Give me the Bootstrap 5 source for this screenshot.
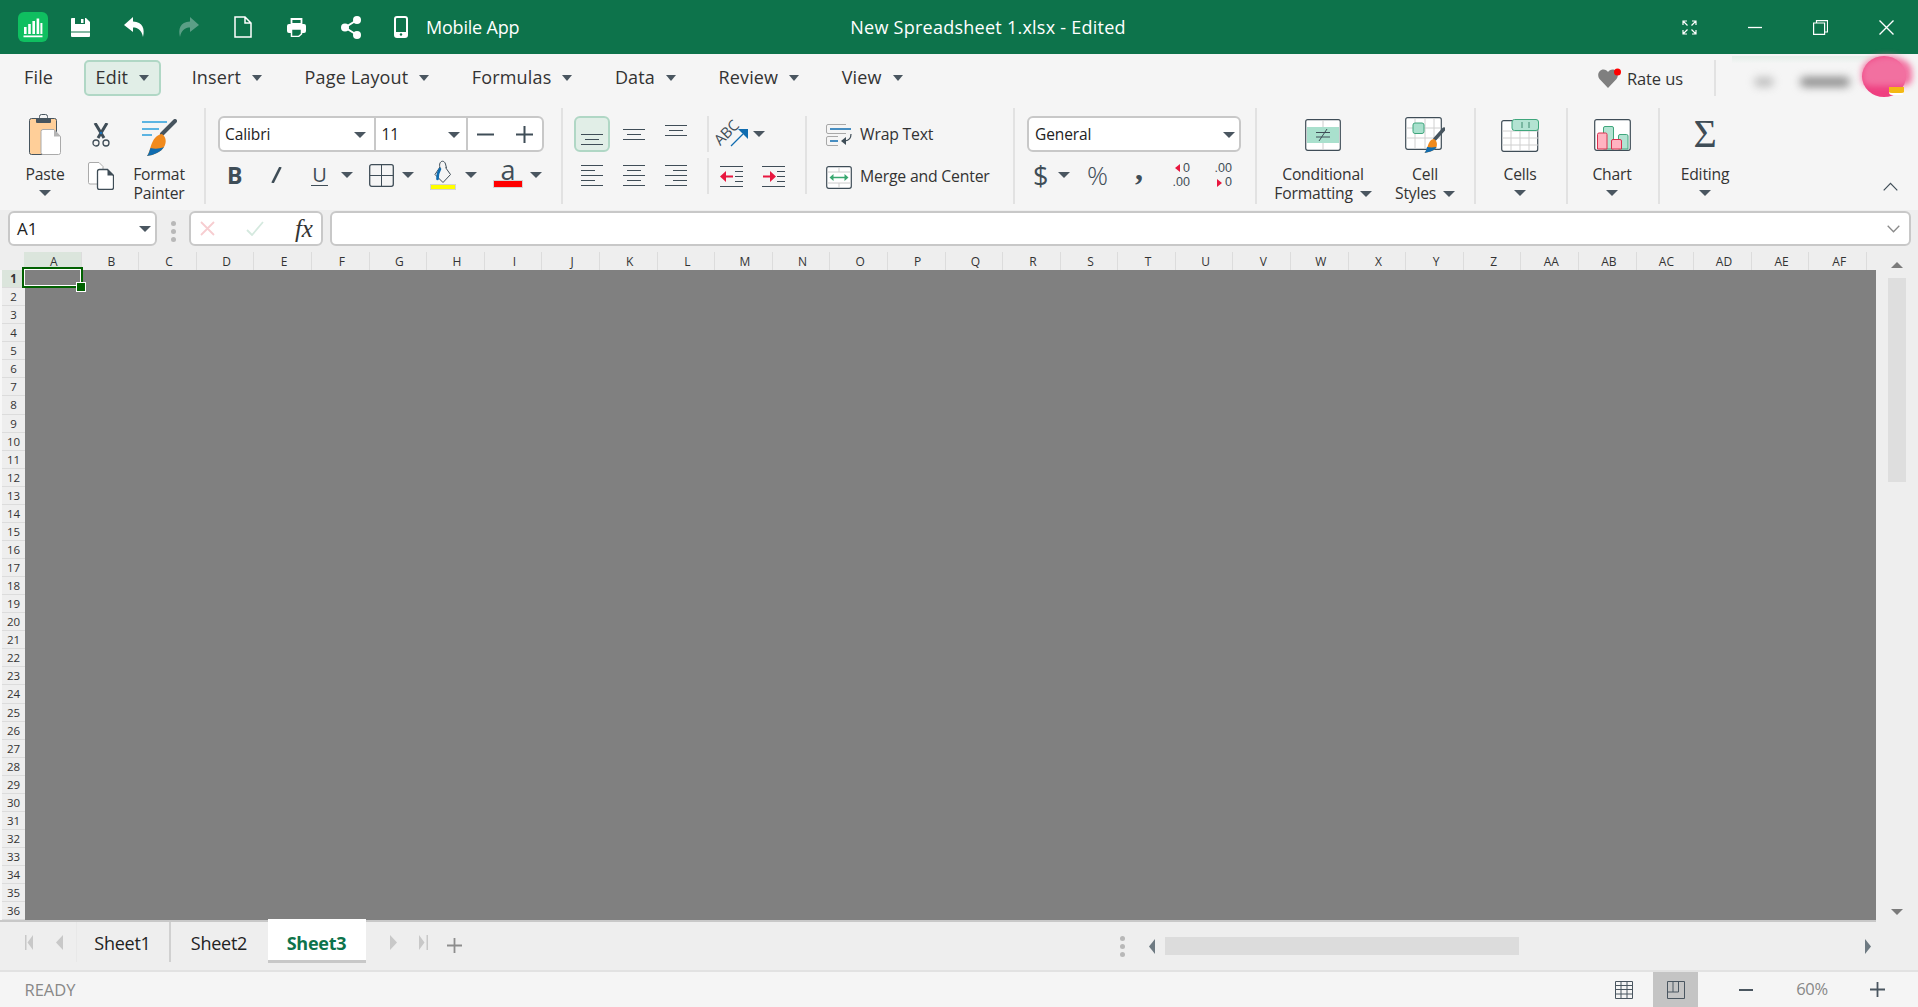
<!DOCTYPE html>
<html lang="en">
<head>
<meta charset="UTF-8" />
<title>New Spreadsheet 1.xlsx - Edited</title>
<link href="https://cdn.jsdelivr.net/npm/bootstrap@5.3.0/dist/css/bootstrap.min.css" rel="stylesheet" />
<style>
body { font-family: "Open Sans", "Noto Sans", sans-serif; font-size: 15px; color: #222; background: #f5f5f5; overflow: hidden; letter-spacing: -.1px; }
.app-shell { height: 1007px; }
.cr { display: inline-block; width: 0; height: 0; border-left: 6px solid transparent; border-right: 6px solid transparent; border-top: 6px solid #4a5660; flex: none; }

/* title bar */
.ttl-bar { height: 54px; background: #0d734b; color: #fff; padding-left: 18px; flex: none; }
.ttl-ic { width: 54px; }
.ttl-ic:first-of-type { margin-left: 5.5px; }
.ttl-phone { width: 48.5px; }
.ttl-mobile { font-size: 18px; letter-spacing: -.2px; }
.ttl-name { font-size: 18px; margin-left: 331px; letter-spacing: .25px; }
.win-btns { margin-left: auto; padding-right: 24px; }
.win-btns svg { display: block; }
.win-btns svg + svg { margin-left: 51px; }

/* menu row */
.mnu-row { height: 54px; padding-left: 12px; gap: 18.5px; flex: none; }
.mnu-btn { height: 36px; margin-top: 6px; padding: 0 10px 2px; border: 2px solid transparent; border-radius: 5px; font-size: 18px; letter-spacing: .15px; color: #333; gap: 11px; }
.mnu-btn .cr { border-left-width: 5.5px; border-right-width: 5.5px; margin-top: 2px; }
.mnu-on { background: #e1eee7; border-color: #b0d7c5; }
.rate-box { margin-left: auto; margin-top: 6px; height: 36px; padding-right: 6px; }
.rate-txt { font-size: 16.5px; margin-left: 5px; color: #333; padding-top: 2px; }
.rate-sep { width: 2px; height: 36px; background: #e2e2e2; margin-left: 31px; margin-right: 16px; }
.usr-blur { width: 180px; height: 41px; margin-top: -3px; }
.usr-strip { left: 0; right: 30px; top: 0; height: 30px; background: linear-gradient(#e4efe9, #f5f5f5 25%); }
.usr-smg { height: 10px; top: 21px; background: #8d8d8d; filter: blur(4px); border-radius: 5px; }
.usr-smg-a { left: 22px; width: 20px; opacity: .5; }
.usr-smg-b { left: 68px; width: 50px; }
.usr-pic { right: 6px; top: 0; width: 44px; height: 41px; border-radius: 50%; background: #ef3f80; overflow: hidden; }
.usr-pic-top { right: 0; top: 0; width: 50px; height: 30px; background: #f270a0; filter: blur(3px); border-radius: 50% 50% 20% 20%; }
.usr-crown { right: 8px; top: 31px; width: 15px; height: 8px; background: #f4b914; border-radius: 0 0 3px 3px; border-bottom: 2px solid #fff; }

/* ribbon */
.rbn { height: 102px; padding-bottom: 6px; flex: none; }
.rb-grp { border-left: 2px solid #e2e2e2; flex: none; position: relative; }
.rb-clip { width: 204px; padding-left: 20px; padding-top: 6px; border-left: 0; }
.rb-font { width: 357px; padding-left: 12px; padding-top: 8px; }
.rb-align { width: 452px; padding-left: 8px; padding-top: 8px; }
.rb-num { width: 242px; padding-left: 12px; padding-top: 8px; }
.rb-sty { width: 219px; padding-left: 7px; padding-top: 6px; }
.rb-cell, .rb-chart { width: 92px; padding-top: 6px; padding-right: 2px; }
.rb-edit { width: 94px; padding-top: 6px; padding-right: 2px; }
.rb-tool { text-align: center; }
.rb-w50 { width: 50px; }
.rb-w30 { width: 30px; margin-left: 16px; padding-top: 9px; }
.rb-w58 { width: 58px; margin-left: 14px; }
.rb-w117 { width: 118px; }
.rb-w86 { width: 86px; }
.ic-slot { height: 42px; }
.rb-lbl { margin-top: 9px; font-size: 15.7px; line-height: 18.5px; color: #333; letter-spacing: -.2px; }
.rb-lbl .cr { margin-left: 3px; vertical-align: 2px; }
.rb-tool > .cr { display: block; margin: 6px auto 0; }
.cp-ic { margin-top: 15px; }
.inp-box { height: 36px; background: #fff; border: 2px solid #c8c8c8; border-radius: 6px; font-size: 15.5px; color: #222; }
.inp-font { width: 326px; }
.inp-fname { width: 157px; padding: 1px 8px 0 5px; border-right: 2px solid #c8c8c8; }
.inp-fsize { width: 92px; padding: 1px 2px 0 5px; border-right: 2px solid #c8c8c8; }
.inp-step { padding: 0 9px; gap: 22px; }
.inp-gen { width: 214px; padding: 2px 4px 0 6px; }
.fnt-tools { display: grid; grid-template-columns: 44px 40px 30px 28px 33px 27px 36px 29px 36px 12px; padding-left: 9px; height: 30px; margin-top: 8px; align-items: center; justify-items: start; color: #3f4d57; }
.fnt-b { font-size: 23px; font-weight: 700; line-height: 1; }
.fnt-u { width: 17px; font-size: 20px; line-height: 20px; text-align: center; border-bottom: 1.5px solid #3f4d57; }
.fnt-col { font-size: 27px; line-height: 20px; height: 30px; width: 28px; text-align: center; }
.fnt-red { display: block; height: 6px; margin-top: 1px; background: #f00; outline: 1.5px solid #d4d4d4; }
.aln-cells { display: grid; grid-template-columns: repeat(3, 42px); grid-template-rows: 36px 34px; row-gap: 6px; place-items: center; width: 136px; }
.aln-on { width: 36px; height: 36px; background: #e1eee7; border: 2px solid #b0d7c5; border-radius: 6px; padding-bottom: 5px; }
.txt-ctl { width: 98px; }
.txt-top, .txt-bot { border-left: 2px solid #e2e2e2; height: 36px; }
.txt-top { padding-left: 10px; }
.txt-bot { padding-left: 11px; margin-top: 6px; gap: 19px; }
.abc-wrap { width: 30px; height: 32px; }
.abc-txt { left: -7px; top: 3px; font-size: 15px; color: #3f4d57; transform: rotate(-45deg); letter-spacing: -.2px; }
.abc-arw { left: 11px; top: 11px; }
.wrp-col { border-left: 2px solid #e2e2e2; padding-left: 19px; height: 78px; font-size: 15.8px; color: #333; letter-spacing: -.2px; }
.wrp-line { height: 42px; gap: 8px; }
.wrp-line:first-child { margin-top: -2px; }
.wrp-line svg { width: 26px; }
.num-tools { display: grid; grid-template-columns: 25px 29px 48px 37px 42px 20px; grid-template-rows: 30px; padding-left: 6px; height: 30px; margin-top: 8px; align-items: center; justify-items: start; color: #3f4d57; }
.num-d { font-size: 27px; line-height: 1; }
.num-p { font-size: 26px; line-height: 1; font-weight: 300; }
.num-c { font-family: "Liberation Serif", serif; font-size: 32px; line-height: 22px; font-weight: 700; height: 22px; margin-bottom: 12px; }
.num-dec { font-family: "Liberation Sans", sans-serif; font-size: 12.5px; line-height: 14.5px; text-align: right; width: 18px; letter-spacing: 0; }
.num-tri { display: inline-block; width: 0; height: 0; border-top: 4.5px solid transparent; border-bottom: 4.5px solid transparent; margin-right: 3px; vertical-align: -.5px; }
.num-tl { border-right: 5px solid #e8173f; }
.num-tr { border-left: 5px solid #e8173f; }
.sgm-ic { font-family: "Liberation Serif", serif; font-size: 40px; line-height: 1; color: #3f4d57; margin: -2px 0 0; }
.rb-chev { margin-left: auto; margin-right: 20px; margin-top: 74px; height: 12px; }

/* formula row */
.fx-row { height: 42px; background: #eee; padding: 1px 7px 0 8px; flex: none; }
.fx-box { height: 35px; background: #fff; border: 2px solid #c8c8c8; border-radius: 6px; }
.fx-name { width: 149px; padding: 0 4px 0 7px; font-size: 17px; color: #222; }
.fx-dots { width: 32px; }
.fx-btns { width: 134px; padding: 0 8px 0 9px; }
.fx-fn { font-family: "Liberation Serif", serif; font-style: italic; font-size: 25px; line-height: 1; margin-left: 31px; color: #333; }
.fx-ok { margin-left: 31px; }
.fx-edit { margin-left: 7px; flex: 1; padding-right: 9px; }
.dot-v { width: 5px; height: 5px; border-radius: 50%; background: #b8b8b8; margin: 1.5px 0; }

/* sheet */
.sh-main { flex: 1; min-height: 0; background: #eee; }
.sh-left { width: 1876px; }
.col-heads { height: 18px; flex: none; }
.ch-blank { width: 24px; flex: none; }
.ch-cell { width: 57.6px; flex: none; padding-left: 3px; text-align: center; font-size: 12px; line-height: 19px; letter-spacing: 0; color: #333; border-right: 1.5px solid #dcdcdc; }
.ch-on { background: #dbe5dc; }
.sh-body { flex: 1; min-height: 0; }
.row-heads { width: 25px; border-left: 2px solid #f7f7f7; flex: none; }
.rh-cell { flex: 1 1 0; min-height: 0; text-align: center; font-size: 11.5px; line-height: 18px; letter-spacing: 0; color: #333; border-bottom: 1px solid #dcdcdc; }
.rh-on { background: #dbe5dc; font-weight: 700; }
.sh-grid { flex: 1; background: #808080; }
.sel-box { left: -3px; top: -3px; width: 61px; height: 21px; border: 2px solid #006100; box-shadow: inset 0 0 0 1px #fff; }
.sel-hnd { right: -4px; bottom: -5px; width: 8px; height: 8px; background: #006100; outline: 1px solid #fff; }
.sh-bline { height: 2px; background: #c8c8c8; flex: none; }
.vs-bar { flex: 1; padding-left: 12px; padding-top: 10px; }
.vs-up { width: 0; border-left: 6px solid transparent; border-right: 6px solid transparent; border-bottom: 6px solid #7b7b7b; margin-left: 3px; }
.vs-dn { width: 0; border-left: 6px solid transparent; border-right: 6px solid transparent; border-top: 6px solid #7b7b7b; margin: auto 0 7px 3px; }
.vs-thumb { width: 18px; height: 204px; background: #dedede; margin-top: 10px; }

/* tabs */
.tab-bar { height: 50px; background: #eee; border-bottom: 2px solid #e2e2e2; flex: none; padding-left: 25px; position: relative; }
.tab-nav { height: 40px; }
.tab-nav1 { width: 30px; }
.tab-nav2 { width: 20.5px; }
.tab-itm { height: 40px; padding-top: 3px; font-size: 18px; letter-spacing: -.25px; color: #222; }
.tab-s1 { width: 95px; border-left: 1px solid #e8e8e8; border-right: 2px solid #d0d0d0; }
.tab-s2 { width: 97px; }
.tab-s3 { width: 98px; height: 44px; margin-top: -3px; padding-top: 7px; background: #fff; border-bottom: 3px solid #c8c8c8; font-weight: 700; color: #0d734b; }
.tab-nav3 { margin-left: 24px; width: 29px; }
.tab-nav4 { width: 28px; }
.tab-add { height: 46px; }
.tab-right { margin-left: auto; width: 798px; height: 48px; }
.hs-thumb { width: 354px; height: 18px; background: #dcdcdc; margin: 0 346px 0 10px; }

/* status */
.sta-bar { height: 35px; flex: none; padding-left: 24.5px; font-size: 16.5px; color: #888; letter-spacing: 0; }
.sta-rdy { padding-top: 1px; }
.sta-tools { margin-left: auto; }
.sta-view { width: 45px; height: 35px; }
.sta-on { background: #c4c4c4; }
.sta-g { margin-right: 20px; }
.sta-min { margin-left: 41px; }
.sta-pct { width: 34px; margin: 0 41px 0 42px; font-size: 16.5px; letter-spacing: -.3px; text-align: center; }
.sta-pls { margin-right: 33px; }
</style>
</head>
<body>
<div class="app-shell d-flex flex-column">

  <!-- title bar -->
  <div class="ttl-bar d-flex align-items-center">
    <svg width="30" height="30" viewBox="0 0 30 30"><rect width="30" height="30" rx="6" fill="#0fbf60"/><path d="M6 15h2.600v7H6zM10.200 12h2.600v10h-2.600zM14.400 9H17v13h-2.600zM18.600 6.500h2.600V22h-2.600zM22.400 11h2v11h-2zM5.500 23.500h19v1.800h-19z" fill="#fff"/></svg>
    <div class="ttl-ic d-flex justify-content-center"><svg width="19" height="19" viewBox="0 0 19 19"><path d="M0 1a1 1 0 0 1 1-1h14l4 4v14a1 1 0 0 1-1 1H1a1 1 0 0 1-1-1z" fill="#fff"/><path d="M4 0h10v6H4z" fill="#0d734b"/><path d="M10 1h2.500v4H10z" fill="#fff"/><path d="M0 13.500h19v1H0z" fill="#0d734b"/></svg></div>
    <div class="ttl-ic d-flex justify-content-center"><svg width="21" height="20" viewBox="0 0 21 20"><path d="M9 0 0 8l9 7v-4.500c5 0 8.500 2.500 10 9.500 2-8 0-15-10-15.500z" fill="#fff"/></svg></div>
    <div class="ttl-ic d-flex justify-content-center"><svg width="21" height="20" viewBox="0 0 21 20"><path d="m12 0 9 8-9 7v-4.500c-5 0-8.500 2.500-10 9.500-2-8 0-15 10-15.500z" fill="#5b9f86"/></svg></div>
    <div class="ttl-ic d-flex justify-content-center"><svg width="18" height="22" viewBox="0 0 18 22"><path d="M1 1h10l6 6v14H1zM11 1v6h6" fill="none" stroke="#fff" stroke-width="1.500"/></svg></div>
    <div class="ttl-ic d-flex justify-content-center"><svg width="19" height="19" viewBox="0 0 19 19"><path d="M4.500 1h10v5h-10z" fill="none" stroke="#fff" stroke-width="1.800"/><rect y="6" width="19" height="9" rx="2" fill="#fff"/><path d="M4.500 11h10v5l-3 2.500h-7z" fill="#0d734b" stroke="#fff" stroke-width="1.500"/></svg></div>
    <div class="ttl-ic d-flex justify-content-center"><svg width="20" height="23" viewBox="0 0 20 23"><path d="M16 4 4 11.500 16 19" fill="none" stroke="#fff" stroke-width="2"/><circle cx="16" cy="4" r="4" fill="#fff"/><circle cx="4" cy="11.500" r="4" fill="#fff"/><circle cx="16" cy="19" r="4" fill="#fff"/></svg></div>
    <div class="ttl-phone d-flex ps-3"><svg width="14" height="22" viewBox="0 0 14 22"><rect x="1" y="1" width="12" height="20" rx="2" fill="none" stroke="#fff" stroke-width="2"/><path d="M1 16h12v5H1z" fill="#fff"/><circle cx="7" cy="18.500" r="1.200" fill="#0d734b"/></svg></div>
    <span class="ttl-mobile">Mobile App</span>
    <span class="ttl-name">New Spreadsheet 1.xlsx - Edited</span>
    <div class="win-btns d-flex align-items-center">
      <svg width="15" height="15" viewBox="0 0 15 15"><path d="M1 5V1h4M1 1l4.500 4.500M10 1h4v4M14 1 9.500 5.500M1 10v4h4M1 14l4.500-4.500M14 10v4h-4M14 14 9.500 9.500" fill="none" stroke="#fff" stroke-width="1.200"/></svg>
      <svg width="14" height="15" viewBox="0 0 14 15"><path d="M0 7.500h14" stroke="#fff" stroke-width="1.300"/></svg>
      <svg width="15" height="15" viewBox="0 0 15 15"><path d="M.6 3h11v11.400H.6zM3.500 3V.6h11v11.400H11.600" fill="none" stroke="#fff" stroke-width="1.200"/></svg>
      <svg width="15" height="15" viewBox="0 0 15 15"><path d="m.5.500 14 14M14.500.500l-14 14" stroke="#fff" stroke-width="1.400"/></svg>
    </div>
  </div>

  <!-- menu row -->
  <div class="mnu-row d-flex align-items-start">
    <div class="mnu-btn d-flex align-items-center">File</div>
    <div class="mnu-btn mnu-on d-flex align-items-center">Edit <span class="cr"></span></div>
    <div class="mnu-btn d-flex align-items-center">Insert <span class="cr"></span></div>
    <div class="mnu-btn d-flex align-items-center">Page Layout <span class="cr"></span></div>
    <div class="mnu-btn d-flex align-items-center">Formulas <span class="cr"></span></div>
    <div class="mnu-btn d-flex align-items-center">Data <span class="cr"></span></div>
    <div class="mnu-btn d-flex align-items-center">Review <span class="cr"></span></div>
    <div class="mnu-btn d-flex align-items-center">View <span class="cr"></span></div>
    <div class="rate-box d-flex align-items-center">
      <svg width="24" height="21" viewBox="0 0 24 21"><path d="M10 20 1.500 11C-1.500 7 1 1.500 5.500 1.500c2 0 3.500 1 4.500 2.500 1-1.500 2.500-2.500 4.500-2.500C19 1.500 21.500 7 18.500 11z" fill="#7f7f7f"/><circle cx="19.500" cy="4" r="3.500" fill="#f00"/></svg>
      <span class="rate-txt">Rate us</span>
      <div class="rate-sep"></div>
      <div class="usr-blur position-relative">
        <div class="usr-strip position-absolute"></div>
        <div class="usr-smg usr-smg-a position-absolute"></div>
        <div class="usr-smg usr-smg-b position-absolute"></div>
        <div class="usr-pic position-absolute"></div>
        <div class="usr-pic-top position-absolute"></div>
        <div class="usr-crown position-absolute"></div>
      </div>
    </div>
  </div>

  <!-- ribbon -->
  <div class="rbn d-flex">
    <div class="rb-grp rb-clip d-flex">
      <div class="rb-w50 rb-tool">
        <div class="ic-slot d-flex justify-content-center align-items-start">
          <svg width="32" height="41" viewBox="0 0 32 41"><rect x=".5" y="4.500" width="27" height="36" rx="2" fill="#ffcf99" stroke="#46545e"/><rect x="10.500" y=".5" width="8" height="5" rx="2" fill="none" stroke="#46545e"/><rect x="7" y="4" width="15" height="5" rx="1" fill="#46545e"/><path d="M14 15.500h11l6.500 7v16a2 2 0 0 1-2 2H14a2 2 0 0 1-2-2v-21a2 2 0 0 1 2-2z" fill="#fff" stroke="#aaa"/><path d="M25 15.500v7h6.500z" fill="#b5b5b5"/></svg>
        </div>
        <div class="rb-lbl">Paste</div>
        <span class="cr"></span>
      </div>
      <div class="rb-w30 d-flex flex-column align-items-center">
        <svg width="18" height="24" viewBox="0 0 18 24"><path d="m3 0 9 15M15 0 6 15" stroke="#3f4d57" stroke-width="3"/><circle cx="4" cy="20" r="3" fill="none" stroke="#3f4d57" stroke-width="1.300"/><circle cx="14" cy="20" r="3" fill="none" stroke="#3f4d57" stroke-width="1.300"/><circle cx="9" cy="10" r="1.300" fill="#1a6fb5"/></svg>
        <svg class="cp-ic" width="26" height="28" viewBox="0 0 26 28"><path d="M2 .5h9l4 4V22H2a1.500 1.500 0 0 1-1.500-1.500V2A1.500 1.500 0 0 1 2 .5z" fill="#fff" stroke="#aaa"/><path d="M11.500 7.500h8l6 6v12a2 2 0 0 1-2 2h-12a2 2 0 0 1-2-2v-16a2 2 0 0 1 2-2z" fill="#fff" stroke="#3f4d57" stroke-width="1.300"/><path d="M19.500 7.500v6h6z" fill="#3f4d57"/></svg>
      </div>
      <div class="rb-w58 rb-tool">
        <div class="ic-slot d-flex justify-content-center align-items-end">
          <svg width="35" height="37" viewBox="0 0 35 37"><path d="M0 3h25M0 10h17M0 16h10" stroke="#2a9fdc" stroke-width="1.300"/><path d="M33 2 20 15" stroke="#46545e" stroke-width="4" stroke-linecap="round"/><path d="M20 15c4 3 5 8 2 13-3 5-10 8-17 9 3-4 3-10 6-15 2-4 6-7 9-7z" fill="#f08a1d"/><path d="M5 37c2-3 2.500-5 3.500-8 4 1 9 1 13.500-1-3 5-10 8-17 9z" fill="#0f6cb0"/></svg>
        </div>
        <div class="rb-lbl">Format<br>Painter</div>
      </div>
    </div>

    <div class="rb-grp rb-font">
      <div class="inp-box inp-font d-flex">
        <div class="inp-fname d-flex align-items-center justify-content-between">Calibri <span class="cr"></span></div>
        <div class="inp-fsize d-flex align-items-center justify-content-between">11 <span class="cr me-1"></span></div>
        <div class="inp-step d-flex align-items-center">
          <svg width="17" height="17" viewBox="0 0 17 17"><path d="M0 8.500h17" stroke="#3f4d57" stroke-width="2"/></svg>
          <svg width="17" height="17" viewBox="0 0 17 17"><path d="M0 8.500h17M8.500 0v17" stroke="#3f4d57" stroke-width="2"/></svg>
        </div>
      </div>
      <div class="fnt-tools">
        <span class="fnt-b">B</span>
        <svg width="11" height="16" viewBox="0 0 11 16"><path d="M9.500 0 1.500 16" stroke="#3f4d57" stroke-width="2.600"/></svg>
        <span class="fnt-u">U</span>
        <span class="cr"></span>
        <svg width="25" height="23" viewBox="0 0 25 23"><rect x=".7" y=".7" width="23.600" height="21.600" rx="2" fill="none" stroke="#3f4d57" stroke-width="1.300"/><path d="M12.500 1v21M1 11.500h23" stroke="#3f4d57"/></svg>
        <span class="cr"></span>
        <svg width="28" height="30" viewBox="0 0 28 30"><path d="M11 8C9 1 15-1 16.500 4l1 4M11 7 6 14.500l8 8 7.500-8-5-7" fill="none" stroke="#3f4d57"/><path d="M11 9C9 12 8.500 15 8.500 19" fill="none" stroke="#0f6cb0" stroke-width="2.600" stroke-linecap="round"/><path d="M1 24h26v6H1z" fill="#d4d4d4"/><path d="M2 25h24v4H2z" fill="#ff0"/></svg>
        <span class="cr"></span>
        <span class="fnt-col">a<span class="fnt-red"></span></span>
        <span class="cr"></span>
      </div>
    </div>

    <div class="rb-grp rb-align d-flex">
      <div class="aln-cells">
        <div class="aln-on d-flex justify-content-center align-items-end"><svg width="22" height="11" viewBox="0 0 22 11"><path d="M0 .5h22M4 5.500h14M0 10.500h22" stroke="#3f4d57"/></svg></div>
        <svg width="22" height="11" viewBox="0 0 22 11"><path d="M0 .5h22M4 5.500h14M0 10.500h22" stroke="#3f4d57"/></svg>
        <svg class="mb-2" width="22" height="11" viewBox="0 0 22 11"><path d="M0 .5h22M4 5.500h14M0 10.500h22" stroke="#3f4d57"/></svg>
        <svg width="22" height="21" viewBox="0 0 22 21"><path d="M0 .5h22M0 5.500h14M0 10.500h22M0 15.500h14M0 20.500h22" stroke="#3f4d57"/></svg>
        <svg width="22" height="21" viewBox="0 0 22 21"><path d="M0 .5h22M4 5.500h14M0 10.500h22M4 15.500h14M0 20.500h22" stroke="#3f4d57"/></svg>
        <svg width="22" height="21" viewBox="0 0 22 21"><path d="M0 .5h22M8 5.500h14M0 10.500h22M8 15.500h14M0 20.500h22" stroke="#3f4d57"/></svg>
      </div>
      <div class="txt-ctl">
        <div class="txt-top d-flex align-items-center">
          <div class="abc-wrap position-relative">
            <span class="abc-txt position-absolute">ABC</span>
            <svg class="abc-arw position-absolute" width="18" height="18" viewBox="0 0 18 18"><path d="M1 17 13 5" stroke="#0f6cb0" stroke-width="1.300"/><path d="M8 0h10v10z" fill="#0f6cb0"/></svg>
          </div>
          <span class="cr ms-1"></span>
        </div>
        <div class="txt-bot d-flex align-items-center">
          <svg width="23" height="21" viewBox="0 0 23 21"><path d="M0 .5h23M15 5.500h8M15 10.500h8M15 15.500h8M0 20.500h23" stroke="#3f4d57"/><path d="M0 10.500 6 5v4.500h7v2H6V16z" fill="#e8173f"/></svg>
          <svg width="23" height="21" viewBox="0 0 23 21"><path d="M0 .5h23M15 5.500h8M15 10.500h8M15 15.500h8M0 20.500h23" stroke="#3f4d57"/><path d="M14 10.500 8 5v4.500H1v2h7V16z" fill="#e8173f"/></svg>
        </div>
      </div>
      <div class="wrp-col">
        <div class="wrp-line d-flex align-items-center">
          <svg width="26" height="22" viewBox="0 0 26 22"><path d="M20 9.500H2A1.500 1.500 0 0 1 .5 8V2A1.500 1.500 0 0 1 2 .5h18M12 12.500H2A1.500 1.500 0 0 0 .5 14v6A1.500 1.500 0 0 0 2 21.500h10" fill="none" stroke="#a8a8a8"/><path d="M4 5h21M4 17h8" stroke="#0f6cb0" stroke-width="1.300"/><path d="M25 10c0 4-2 6.500-6 7" fill="none" stroke="#3f4d57" stroke-width="1.200"/><path d="m15 17 5-4v8z" fill="#3f4d57"/></svg>
          <span>Wrap Text</span>
        </div>
        <div class="wrp-line d-flex align-items-center">
          <svg width="26" height="23" viewBox="0 0 26 23"><rect x=".7" y=".7" width="24.600" height="21.600" rx="2" fill="#fff" stroke="#3f4d57" stroke-width="1.200"/><path d="M13 1v5M13 17v5M1 6h24M1 17h24" stroke="#ccc"/><path d="M5 11.500h16" stroke="#3aa870" stroke-width="1.500"/><path d="m3.500 11.500 4-3.500v7zM22.500 11.500l-4-3.500v7z" fill="#3aa870"/></svg>
          <span>Merge and Center</span>
        </div>
      </div>
    </div>

    <div class="rb-grp rb-num">
      <div class="inp-box inp-gen d-flex align-items-center justify-content-between">General <span class="cr"></span></div>
      <div class="num-tools">
        <span class="num-d">$</span>
        <span class="cr"></span>
        <span class="num-p">%</span>
        <span class="num-c">,</span>
        <div class="num-dec"><span class="num-tri num-tl"></span>0<br>.00</div>
        <div class="num-dec">.00<br><span class="num-tri num-tr"></span>0</div>
      </div>
    </div>

    <div class="rb-grp rb-sty d-flex">
      <div class="rb-w117 rb-tool">
        <div class="ic-slot d-flex justify-content-center align-items-center">
          <svg width="36" height="32" viewBox="0 0 36 32"><rect x=".7" y=".7" width="34.600" height="30.600" rx="2" fill="#fff" stroke="#3f4d57" stroke-width="1.200"/><path d="M18 1v30" stroke="#ccc"/><path d="M2 8h32v16H2z" fill="#a9e0cd"/><path d="M11 13.500h14M11 18h14M22 10l-8 12" stroke="#3f4d57"/></svg>
        </div>
        <div class="rb-lbl">Conditional<br>Formatting <span class="cr"></span></div>
      </div>
      <div class="rb-w86 rb-tool">
        <div class="ic-slot d-flex justify-content-center align-items-center">
          <svg width="40" height="36" viewBox="0 0 40 36"><rect x=".7" y=".7" width="35.600" height="31.600" rx="2" fill="#fff" stroke="#3f4d57" stroke-width="1.200"/><path d="M1 11h35M1 21h35M10 1v31M20 1v31M29 1v31" stroke="#d0d0d0"/><rect x="8" y="6" width="11" height="10.500" rx="2" fill="#a9e0cd" stroke="#3fa67c"/><path d="M39 12 30 22" stroke="#46545e" stroke-width="3.500" stroke-linecap="round"/><path d="M29 22c3 2 3.500 5 2.500 8-1 3-6 5-12 6 3-3 2.500-7 5-11 1-2 3-3 4.500-3z" fill="#f08a1d"/><path d="M19.500 36c1.500-2 2-4 2.500-6 3 .5 6 .5 9.500 0-1 3-6 5-12 6z" fill="#0f6cb0"/></svg>
        </div>
        <div class="rb-lbl">Cell<br>Styles <span class="cr"></span></div>
      </div>
    </div>

    <div class="rb-grp rb-cell rb-tool">
      <div class="ic-slot d-flex justify-content-center align-items-center">
        <svg width="38" height="33" viewBox="0 0 38 33"><rect x=".7" y="1.700" width="36" height="30.600" rx="2" fill="#fff" stroke="#3f4d57" stroke-width="1.200"/><path d="M1 12h36M1 19h36M1 26h36M10 12v20M19 12v20M28 12v20" stroke="#d0d0d0"/><rect x="11" y=".5" width="26.500" height="11" rx="2.500" fill="#b3e3d2" stroke="#3fa67c"/><path d="M21 3v6M28 3v6" stroke="#3f8a6e"/></svg>
      </div>
      <div class="rb-lbl">Cells</div>
      <span class="cr"></span>
    </div>

    <div class="rb-grp rb-chart rb-tool">
      <div class="ic-slot d-flex justify-content-center align-items-center">
        <svg width="37" height="32" viewBox="0 0 37 32"><rect x=".7" y=".7" width="35.600" height="30.600" rx="2" fill="#fff" stroke="#3f4d57" stroke-width="1.200"/><path d="M9.500 30V9A1.500 1.500 0 0 1 11 7.500h7A1.500 1.500 0 0 1 19.500 9v21zM24.500 30V17a1.500 1.500 0 0 1 1.500-1.500h6.500A1.500 1.500 0 0 1 34 17v13z" fill="#b3e3d2" stroke="#3fa67c"/><path d="M3.500 30V15.500A1.500 1.500 0 0 1 5 14h6.500a1.500 1.500 0 0 1 1.500 1.500V30zM17.500 30v-8a1.500 1.500 0 0 1 1.500-1.500h7a1.500 1.500 0 0 1 1.500 1.500v8z" fill="#ffb3c1" stroke="#d9304f"/></svg>
      </div>
      <div class="rb-lbl">Chart</div>
      <span class="cr"></span>
    </div>

    <div class="rb-grp rb-edit rb-tool">
      <div class="ic-slot d-flex justify-content-center align-items-center"><span class="sgm-ic">Σ</span></div>
      <div class="rb-lbl">Editing</div>
      <span class="cr"></span>
    </div>

    <div class="rb-chev">
      <svg class="d-block" width="15" height="9" viewBox="0 0 15 9"><path d="m.7 8.300 6.800-7 6.800 7" fill="none" stroke="#3f4d57" stroke-width="1.200"/></svg>
    </div>
  </div>

  <!-- formula row -->
  <div class="fx-row d-flex align-items-start">
    <div class="fx-box fx-name d-flex align-items-center justify-content-between">A1 <span class="cr"></span></div>
    <div class="fx-dots d-flex flex-column align-items-center pt-2"><span class="dot-v"></span><span class="dot-v"></span><span class="dot-v"></span></div>
    <div class="fx-box fx-btns d-flex align-items-center">
      <svg width="15" height="15" viewBox="0 0 15 15"><path d="m1 1 13 13M14 1 1 14" stroke="#f7cdd0" stroke-width="1.800"/></svg>
      <svg class="fx-ok" width="18" height="15" viewBox="0 0 18 15"><path d="m1 9 5 5L17 1" fill="none" stroke="#d5e9df" stroke-width="1.800"/></svg>
      <span class="fx-fn">fx</span>
    </div>
    <div class="fx-box fx-edit d-flex align-items-center justify-content-end">
      <svg width="13" height="8" viewBox="0 0 13 8"><path d="m.7.7 5.800 6 5.800-6" fill="none" stroke="#8a8a8a" stroke-width="1.300"/></svg>
    </div>
  </div>

  <!-- sheet -->
  <div class="sh-main d-flex">
    <div class="sh-left d-flex flex-column">
      <div class="col-heads d-flex" id="colHeads"><div class="ch-blank"></div></div>
      <div class="sh-body d-flex">
        <div class="row-heads d-flex flex-column" id="rowHeads"></div>
        <div class="sh-grid position-relative">
          <div class="sel-box position-absolute"><div class="sel-hnd position-absolute"></div></div>
        </div>
      </div>
      <div class="sh-bline"></div>
    </div>
    <div class="vs-bar d-flex flex-column">
      <div class="vs-up"></div>
      <div class="vs-thumb"></div>
      <div class="vs-dn"></div>
    </div>
  </div>

  <!-- sheet tabs -->
  <div class="tab-bar d-flex align-items-start">
    <div class="tab-nav tab-nav1 d-flex align-items-center"><svg width="8" height="15" viewBox="0 0 8 15"><path d="M0 0h1.500v15H0zM8 0v15L2.500 7.500z" fill="#c8c8c8"/></svg></div>
    <div class="tab-nav tab-nav2 d-flex align-items-center"><svg width="8" height="15" viewBox="0 0 8 15"><path d="M8 0v15L1 7.500z" fill="#c8c8c8"/></svg></div>
    <div class="tab-itm tab-s1 d-flex align-items-center justify-content-center">Sheet1</div>
    <div class="tab-itm tab-s2 d-flex align-items-center justify-content-center">Sheet2</div>
    <div class="tab-itm tab-s3 d-flex align-items-center justify-content-center">Sheet3</div>
    <div class="tab-nav tab-nav3 d-flex align-items-center"><svg width="8" height="15" viewBox="0 0 8 15"><path d="M0 0v15l7-7.500z" fill="#c8c8c8"/></svg></div>
    <div class="tab-nav tab-nav4 d-flex align-items-center"><svg width="9" height="15" viewBox="0 0 9 15"><path d="M0 0v15l5.500-7.500zM7.500 0H9v15H7.500z" fill="#c8c8c8"/></svg></div>
    <div class="tab-add d-flex align-items-center"><svg width="15" height="15" viewBox="0 0 15 15"><path d="M0 7.500h15M7.500 0v15" stroke="#8d8d8d" stroke-width="1.800"/></svg></div>
    <div class="tab-right d-flex align-items-center">
      <div class="d-flex flex-column"><span class="dot-v"></span><span class="dot-v"></span><span class="dot-v"></span></div>
      <svg class="ms-4" width="6" height="15" viewBox="0 0 6 15"><path d="M6 0v15L0 7.500z" fill="#6e7a82"/></svg>
      <div class="hs-thumb"></div>
      <svg width="6" height="15" viewBox="0 0 6 15"><path d="M0 0v15l6-7.500z" fill="#6e7a82"/></svg>
    </div>
  </div>

  <!-- status bar -->
  <div class="sta-bar d-flex align-items-center">
    <span class="sta-rdy">READY</span>
    <div class="sta-tools d-flex align-items-center">
      <svg class="sta-g" width="18" height="18" viewBox="0 0 18 18"><path d="M.5.5h17v17H.5zM.5 4.500h17M.5 8.500h17M.5 13h17M6 .5v17M12 .5v17" fill="none" stroke="#4a5660"/></svg>
      <div class="sta-view sta-on d-flex align-items-center justify-content-center"><svg width="18" height="18" viewBox="0 0 18 18"><path d="M.5.5h17v17H.5zM.5 11h11V.5M6 .5V11" fill="none" stroke="#4a5660"/></svg></div>
      <svg class="sta-min" width="14" height="2" viewBox="0 0 14 2"><path d="M0 1h14" stroke="#4a5660" stroke-width="2"/></svg>
      <span class="sta-pct">60%</span>
      <svg class="sta-pls" width="15" height="15" viewBox="0 0 15 15"><path d="M0 7.500h15M7.500 0v15" stroke="#4a5660" stroke-width="1.800"/></svg>
    </div>
  </div>
</div>

<script src="https://cdn.jsdelivr.net/npm/bootstrap@5.3.0/dist/js/bootstrap.bundle.min.js"></script>
<script>
// column letters A..AF and row numbers 1..36
const colHeads = document.getElementById('colHeads');
const letters = [];
for (let i = 0; i < 26; i++) letters.push(String.fromCharCode(65 + i));
for (let i = 0; i < 6; i++) letters.push('A' + String.fromCharCode(65 + i));
letters.forEach((c, i) => {
  colHeads.insertAdjacentHTML('beforeend', `<div class="ch-cell${i === 0 ? ' ch-on' : ''}">${c}</div>`);
});
const rowHeads = document.getElementById('rowHeads');
for (let r = 1; r <= 36; r++) {
  rowHeads.insertAdjacentHTML('beforeend', `<div class="rh-cell${r === 1 ? ' rh-on' : ''}">${r}</div>`);
}
</script>
</body>
</html>
